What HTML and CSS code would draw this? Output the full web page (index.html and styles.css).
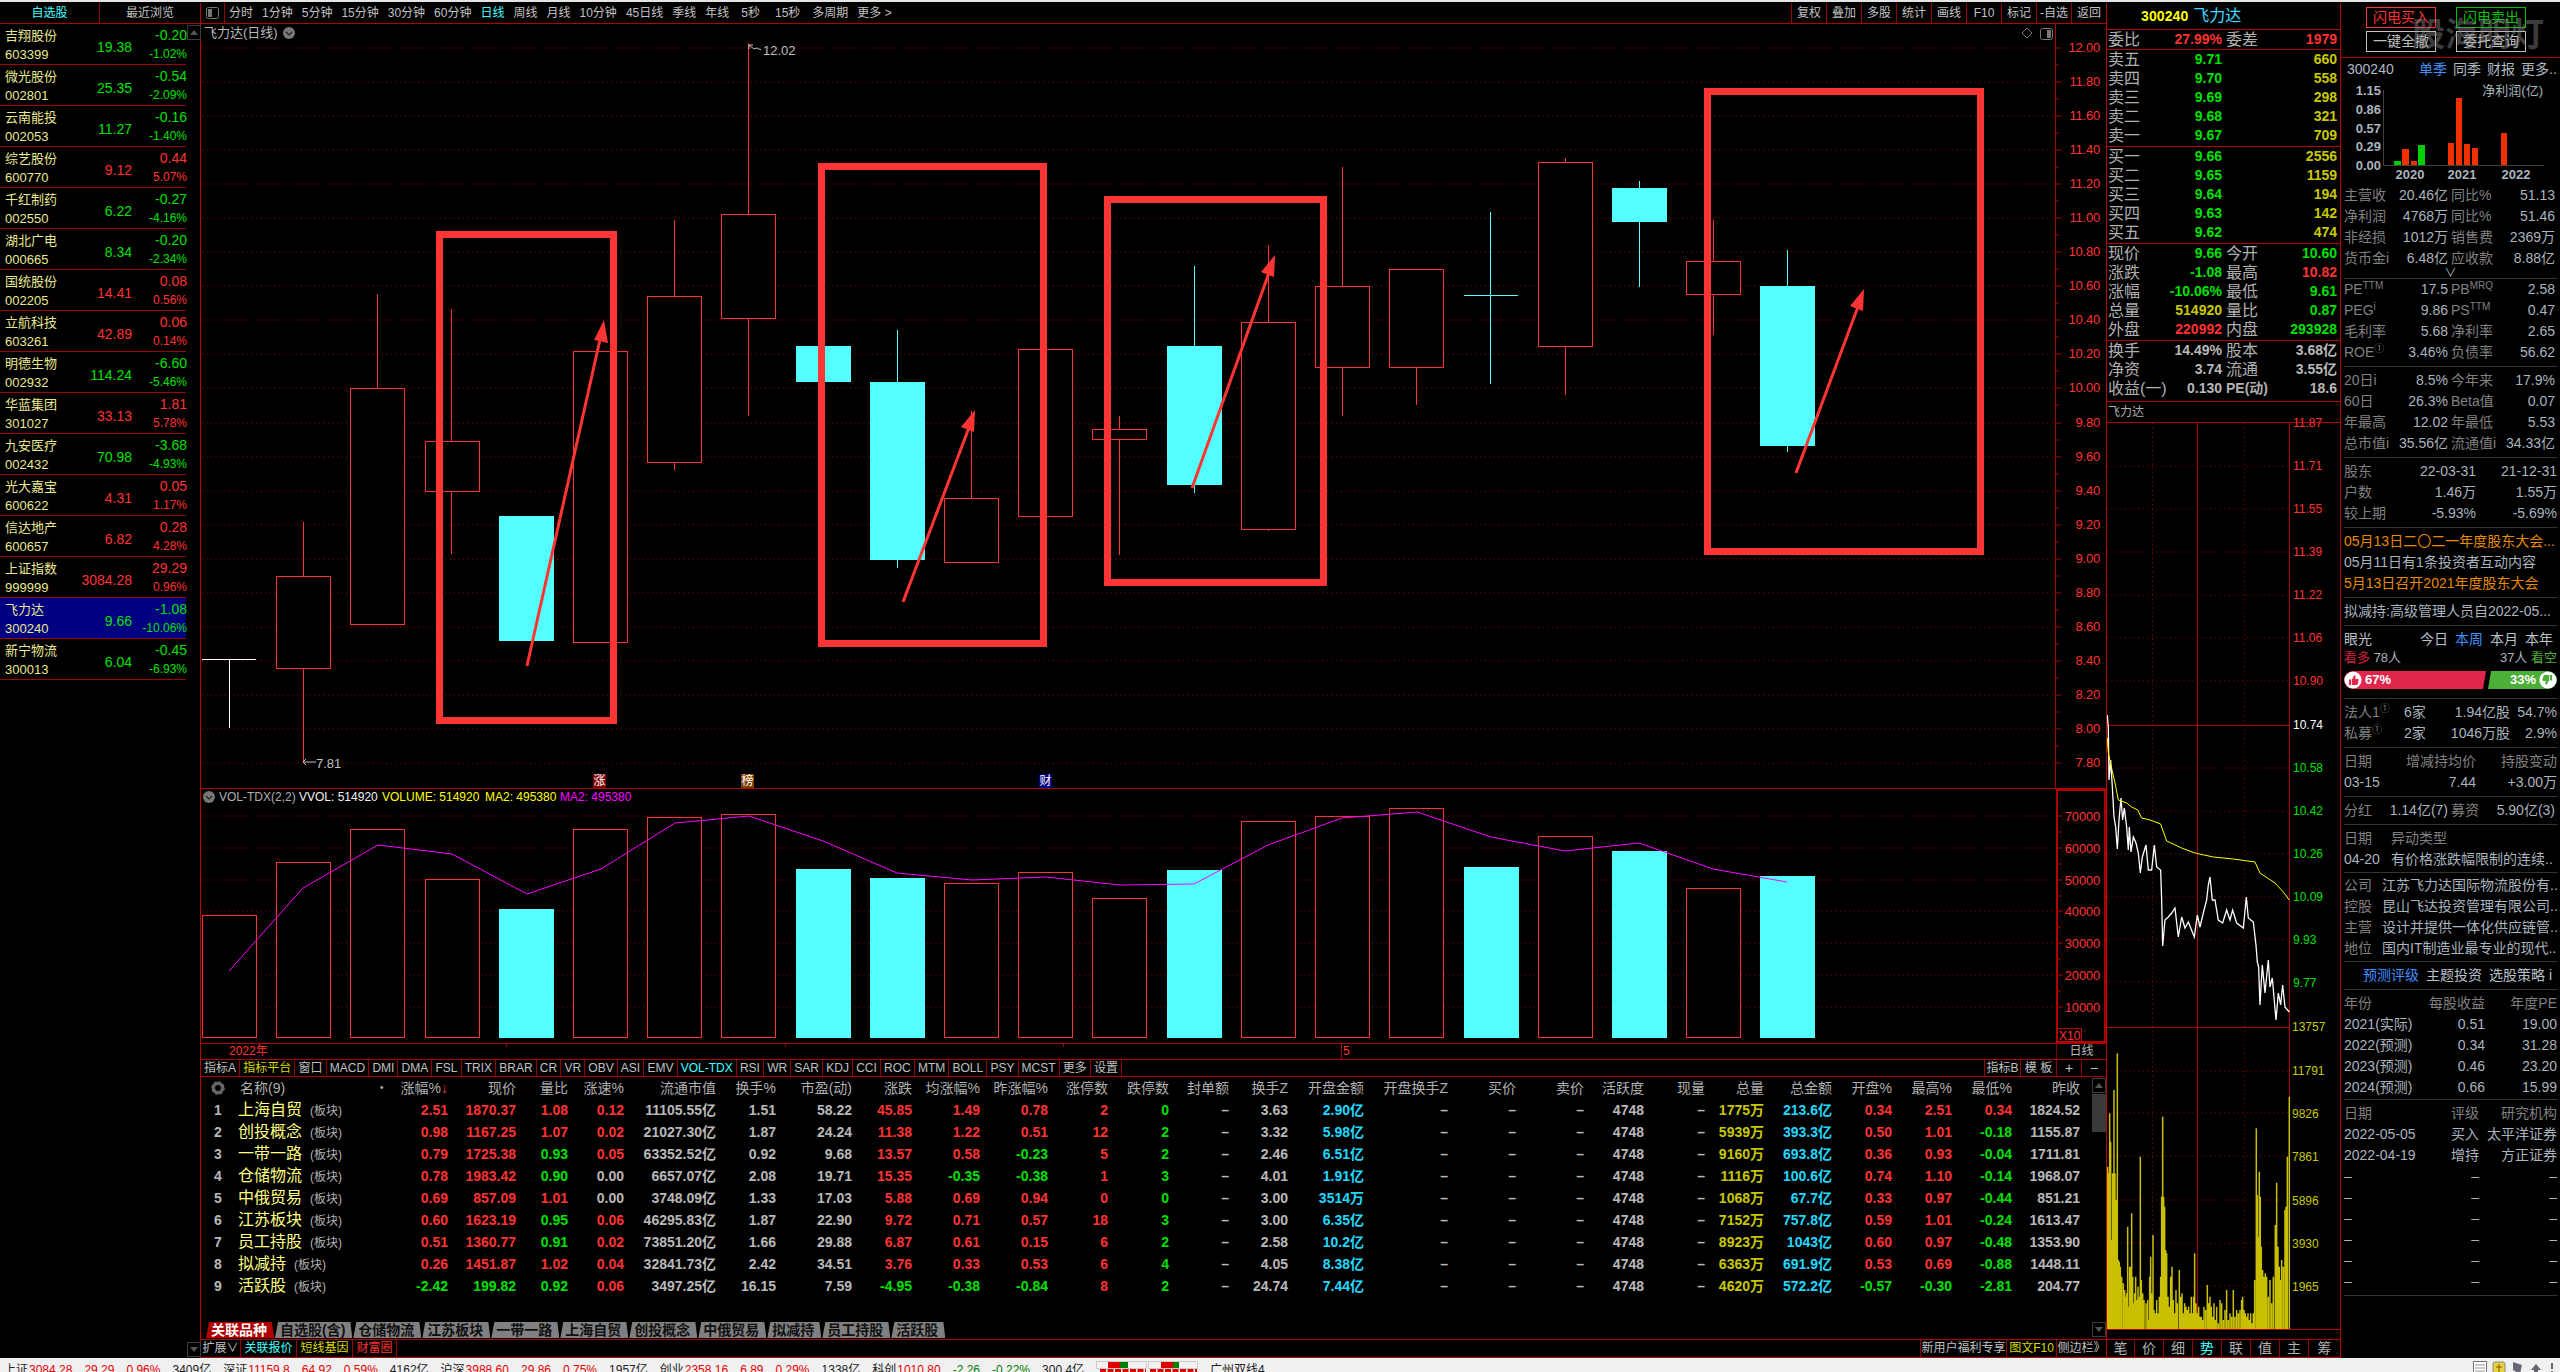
FILE: index.html
```html
<!DOCTYPE html>
<html lang="zh">
<head>
<meta charset="utf-8">
<title>飞力达</title>
<link rel="stylesheet" href="styles.css">
</head>
<body>
<div class="strip"></div>
<div class="main">

<aside class="watch">
  <div class="wtabs"><span class="wtab on">自选股</span><span class="wtab">最近浏览</span></div>
  <div class="wlist">
    <div class="wrow"><span class="wn">吉翔股份</span><span class="wp g">19.38</span><span class="wc g">-0.20</span><span class="wc2">603399</span><span class="wq g">-1.02%</span></div>
    <div class="wrow"><span class="wn">微光股份</span><span class="wp g">25.35</span><span class="wc g">-0.54</span><span class="wc2">002801</span><span class="wq g">-2.09%</span></div>
    <div class="wrow"><span class="wn">云南能投</span><span class="wp g">11.27</span><span class="wc g">-0.16</span><span class="wc2">002053</span><span class="wq g">-1.40%</span></div>
    <div class="wrow"><span class="wn">综艺股份</span><span class="wp r">9.12</span><span class="wc r">0.44</span><span class="wc2">600770</span><span class="wq r">5.07%</span></div>
    <div class="wrow"><span class="wn">千红制药</span><span class="wp g">6.22</span><span class="wc g">-0.27</span><span class="wc2">002550</span><span class="wq g">-4.16%</span></div>
    <div class="wrow"><span class="wn">湖北广电</span><span class="wp g">8.34</span><span class="wc g">-0.20</span><span class="wc2">000665</span><span class="wq g">-2.34%</span></div>
    <div class="wrow"><span class="wn">国统股份</span><span class="wp r">14.41</span><span class="wc r">0.08</span><span class="wc2">002205</span><span class="wq r">0.56%</span></div>
    <div class="wrow"><span class="wn">立航科技</span><span class="wp r">42.89</span><span class="wc r">0.06</span><span class="wc2">603261</span><span class="wq r">0.14%</span></div>
    <div class="wrow"><span class="wn">明德生物</span><span class="wp g">114.24</span><span class="wc g">-6.60</span><span class="wc2">002932</span><span class="wq g">-5.46%</span></div>
    <div class="wrow"><span class="wn">华蓝集团</span><span class="wp r">33.13</span><span class="wc r">1.81</span><span class="wc2">301027</span><span class="wq r">5.78%</span></div>
    <div class="wrow"><span class="wn">九安医疗</span><span class="wp g">70.98</span><span class="wc g">-3.68</span><span class="wc2">002432</span><span class="wq g">-4.93%</span></div>
    <div class="wrow"><span class="wn">光大嘉宝</span><span class="wp r">4.31</span><span class="wc r">0.05</span><span class="wc2">600622</span><span class="wq r">1.17%</span></div>
    <div class="wrow"><span class="wn">信达地产</span><span class="wp r">6.82</span><span class="wc r">0.28</span><span class="wc2">600657</span><span class="wq r">4.28%</span></div>
    <div class="wrow"><span class="wn">上证指数</span><span class="wp r">3084.28</span><span class="wc r">29.29</span><span class="wc2">999999</span><span class="wq r">0.96%</span></div>
    <div class="wrow sel"><span class="wn">飞力达</span><span class="wp g">9.66</span><span class="wc g">-1.08</span><span class="wc2">300240</span><span class="wq g">-10.06%</span></div>
    <div class="wrow"><span class="wn">新宁物流</span><span class="wp g">6.04</span><span class="wc g">-0.45</span><span class="wc2">300013</span><span class="wq g">-6.93%</span></div>
  </div>
  <div class="sbtn wup"><i class="tri"></i></div>
  <div class="sbtn wdn"><i class="tri down"></i></div>
</aside>

<section class="center">
  <nav class="topbar">
    <svg class="panelicon" viewBox="0 0 13 12"><rect x=".5" y=".5" width="12" height="11" rx="2" fill="none" stroke="#777"/><rect x="2" y="2" width="4" height="8" fill="#777"/></svg>
    <div class="periods">
      <span>分时</span><span>1分钟</span><span>5分钟</span><span>15分钟</span><span>30分钟</span><span>60分钟</span><span class="c">日线</span><span>周线</span><span>月线</span><span>10分钟</span><span>45日线</span><span>季线</span><span>年线</span><span class="wide">5秒</span><span class="wide">15秒</span><span>多周期</span><span>更多 &gt;</span>
    </div>
    <div class="tools"><span>复权</span><span>叠加</span><span>多股</span><span>统计</span><span>画线</span><span>F10</span><span>标记</span><span>-自选</span><span>返回</span></div>
  </nav>

  <svg class="kline" viewBox="201 24 1905 764">
    <path class="dots" d="M202 48H2055M202 82H2055M202 116H2055M202 150H2055M202 184H2055M202 218H2055M202 252H2055M202 286H2055M202 320H2055M202 354H2055M202 388H2055M202 423H2055M202 457H2055M202 491H2055M202 525H2055M202 559H2055M202 593H2055M202 627H2055M202 661H2055M202 695H2055M202 729H2055M202 763H2055"/>
    <path class="redline" d="M2055.5 24V788"/>
    <path class="redline" d="M2056 48h5M2056 65h3M2056 82h5M2056 99h3M2056 116h5M2056 133h3M2056 150h5M2056 167h3M2056 184h5M2056 201h3M2056 218h5M2056 235h3M2056 252h5M2056 269h3M2056 286h5M2056 303h3M2056 320h5M2056 337h3M2056 354h5M2056 371h3M2056 388h5M2056 405h3M2056 423h5M2056 440h3M2056 457h5M2056 474h3M2056 491h5M2056 508h3M2056 525h5M2056 542h3M2056 559h5M2056 576h3M2056 593h5M2056 610h3M2056 627h5M2056 644h3M2056 661h5M2056 678h3M2056 695h5M2056 712h3M2056 729h5M2056 746h3M2056 763h5"/>
    <g class="axis">
      <text x="2100" y="52">12.00</text><text x="2100" y="86">11.80</text><text x="2100" y="120">11.60</text><text x="2100" y="154">11.40</text><text x="2100" y="188">11.20</text><text x="2100" y="222">11.00</text><text x="2100" y="256">10.80</text><text x="2100" y="290">10.60</text><text x="2100" y="324">10.40</text><text x="2100" y="358">10.20</text><text x="2100" y="392">10.00</text><text x="2100" y="427">9.80</text><text x="2100" y="461">9.60</text><text x="2100" y="495">9.40</text><text x="2100" y="529">9.20</text><text x="2100" y="563">9.00</text><text x="2100" y="597">8.80</text><text x="2100" y="631">8.60</text><text x="2100" y="665">8.40</text><text x="2100" y="699">8.20</text><text x="2100" y="733">8.00</text><text x="2100" y="767">7.80</text>
    </g>
    <path class="wicku" d="M303.5 522V576M303.5 669V762M377.5 294V388M451.5 309V441M451.5 491V554M674.5 220V296M674.5 462V470M748.5 43V214M748.5 318V416M971.5 411V498M1119.5 416V555M1268.5 245V322M1268.5 529V531M1342.5 167V286M1342.5 367V416M1416.5 269V405M1565.5 158V162M1565.5 346V395M1713.5 220V261M1713.5 294V335"/>
    <path class="wickd" d="M897.5 330V382M897.5 560V568M1194.5 266V346M1194.5 485V493M1490.5 212V384M1464 295.5H1518M1639.5 181V188M1639.5 222V287M1787.5 250V286M1787.5 446V452"/>
    <path class="wickw" d="M202 659.5H256M229.5 659V728"/>
    <rect class="up" x="276.5" y="576.5" width="54" height="92"/>
    <rect class="up" x="350.5" y="388.5" width="54" height="236"/>
    <rect class="up" x="425.5" y="441.5" width="54" height="50"/>
    <rect class="dn" x="499" y="516" width="55" height="125"/>
    <rect class="up" x="573.5" y="351.5" width="54" height="291"/>
    <rect class="up" x="647.5" y="296.5" width="54" height="166"/>
    <rect class="up" x="721.5" y="214.5" width="54" height="104"/>
    <rect class="dn" x="796" y="346" width="55" height="36"/>
    <rect class="dn" x="870" y="382" width="55" height="178"/>
    <rect class="up" x="944.5" y="498.5" width="54" height="64"/>
    <rect class="up" x="1018.5" y="349.5" width="54" height="167"/>
    <rect class="up" x="1092.5" y="429.5" width="54" height="10"/>
    <rect class="dn" x="1167" y="346" width="55" height="139"/>
    <rect class="up" x="1241.5" y="322.5" width="54" height="207"/>
    <rect class="up" x="1315.5" y="286.5" width="54" height="81"/>
    <rect class="up" x="1389.5" y="269.5" width="54" height="98"/>
    <rect class="up" x="1538.5" y="162.5" width="54" height="184"/>
    <rect class="dn" x="1612" y="188" width="55" height="34"/>
    <rect class="up" x="1686.5" y="261.5" width="54" height="33"/>
    <rect class="dn" x="1760" y="286" width="55" height="160"/>
    <rect class="box" x="439.5" y="234.5" width="174" height="486"/>
    <rect class="box" x="821.5" y="166.5" width="222" height="477"/>
    <rect class="box" x="1107.5" y="199.5" width="216" height="383"/>
    <rect class="box" x="1707.5" y="91.5" width="273" height="460"/>
    <path class="arrow" d="M527 666L601 335"/><path class="head" d="M604 320l-10 20l14 3z"/>
    <path class="arrow" d="M903 602L970 425"/><path class="head" d="M975 410l-14 17l13 5z"/>
    <path class="arrow" d="M1192 488L1270 270"/><path class="head" d="M1275 255l-14 17l13 5z"/>
    <path class="arrow" d="M1796 473L1859 304"/><path class="head" d="M1864 289l-14 17l13 5z"/>
    <g class="note">
      <path d="M749 45l5 4l3-1l4 2M749 45v4M749 45h4M303 762H316M303 762l3-3M303 762l3 3"/>
      <text x="763" y="55">12.02</text><text x="316" y="768">7.81</text>
    </g>
    <rect x="593" y="774" width="13" height="14" fill="#800000"/>
    <rect x="741" y="774" width="13" height="14" fill="#804000"/>
    <rect x="1039" y="774" width="13" height="14" fill="#000080"/>
    <g class="marks"><text x="599.5" y="785">涨</text><text x="747.5" y="785">榜</text><text x="1045.5" y="785">财</text></g>
    <path class="diamond" d="M2027 28l5 5l-5 5l-5-5z"/>
    <rect x="2040.5" y="28.5" width="12" height="11" rx="2" fill="none" stroke="#777"/><rect x="2047" y="30" width="4" height="8" fill="#777"/>
  </svg>
  <div class="ktitle"><span>飞力达(日线)</span><svg class="cdot" viewBox="0 0 12 12"><circle cx="6" cy="6" r="6" fill="#777"/><path d="M3 5l3 3l3-3" fill="none" stroke="#222" stroke-width="1.2"/></svg></div>

  <svg class="vol" viewBox="201 789 1905 254">
    <path class="dots" d="M202 816H2055M202 848H2055M202 880H2055M202 911H2055M202 943H2055M202 975H2055M202 1007H2055"/>
    <rect class="up" x="202.5" y="915.5" width="54" height="122"/>
    <rect class="up" x="276.5" y="862.5" width="54" height="175"/>
    <rect class="up" x="350.5" y="829.5" width="54" height="208"/>
    <rect class="up" x="425.5" y="879.5" width="54" height="158"/>
    <rect class="dn" x="499" y="909" width="55" height="129"/>
    <rect class="up" x="573.5" y="829.5" width="54" height="208"/>
    <rect class="up" x="647.5" y="817.5" width="54" height="220"/>
    <rect class="up" x="721.5" y="814.5" width="54" height="223"/>
    <rect class="dn" x="796" y="869" width="55" height="169"/>
    <rect class="dn" x="870" y="878" width="55" height="160"/>
    <rect class="up" x="944.5" y="883.5" width="54" height="154"/>
    <rect class="up" x="1018.5" y="872.5" width="54" height="165"/>
    <rect class="up" x="1092.5" y="898.5" width="54" height="139"/>
    <rect class="dn" x="1167" y="870" width="55" height="168"/>
    <rect class="up" x="1241.5" y="821.5" width="54" height="216"/>
    <rect class="up" x="1315.5" y="816.5" width="54" height="221"/>
    <rect class="up" x="1389.5" y="808.5" width="54" height="229"/>
    <rect class="dn" x="1464" y="867" width="55" height="171"/>
    <rect class="up" x="1538.5" y="836.5" width="54" height="201"/>
    <rect class="dn" x="1612" y="851" width="55" height="187"/>
    <rect class="up" x="1686.5" y="888.5" width="54" height="149"/>
    <rect class="dn" x="1760" y="876" width="55" height="162"/>
    <polyline class="ma" points="229,971 303,888 378,845 452,854 527,894 601,869 675,823 749,816 823,841 897,873 972,880 1046,877 1120,885 1194,884 1268,845 1342,818 1417,812 1491,837 1565,851 1639,843 1713,869 1787,882"/>
    <rect class="thick" x="2057" y="790" width="48" height="252"/>
    <path class="redline" d="M2058 816h5M2058 848h5M2058 880h5M2058 911h5M2058 943h5M2058 975h5M2058 1007h5M2058 832h3M2058 864h3M2058 896h3M2058 927h3M2058 959h3M2058 991h3"/>
    <g class="axis">
      <text x="2100" y="821">70000</text><text x="2100" y="853">60000</text><text x="2100" y="885">50000</text><text x="2100" y="916">40000</text><text x="2100" y="948">30000</text><text x="2100" y="980">20000</text><text x="2100" y="1012">10000</text>
    </g>
    <rect class="xten" x="2057.5" y="1028.5" width="24" height="13"/>
    <text class="xtxt" x="2059" y="1040">X10</text>
    <circle cx="209" cy="797" r="6" fill="#777"/><path d="M206 796l3 3l3-3" fill="none" stroke="#222" stroke-width="1.2"/>
    <g class="legend">
      <text x="219" y="801" class="l1">VOL-TDX(2,2)</text>
      <text x="299" y="801" class="l2">VVOL: 514920</text>
      <text x="382" y="801" class="l3">VOLUME: 514920</text>
      <text x="485" y="801" class="l3">MA2: 495380</text>
      <text x="560" y="801" class="l4">MA2: 495380</text>
    </g>
  </svg>

  <div class="dates">
    <i class="tick t1"></i><i class="tick t2"></i><i class="tick t3"></i>
    <span class="y2022">2022年</span><span class="m5">5</span>
    <span class="dcell">日线</span>
  </div>

  <div class="itabs">
    <div class="igroup">
      <span>指标A</span><span class="y">指标平台</span><span>窗口</span><span>MACD</span><span>DMI</span><span>DMA</span><span>FSL</span><span>TRIX</span><span>BRAR</span><span>CR</span><span>VR</span><span>OBV</span><span>ASI</span><span>EMV</span><span class="c">VOL-TDX</span><span>RSI</span><span>WR</span><span>SAR</span><span>KDJ</span><span>CCI</span><span>ROC</span><span>MTM</span><span>BOLL</span><span>PSY</span><span>MCST</span><span>更多</span><span>设置</span>
    </div>
    <div class="igroup2"><span class="a">指标B</span><span class="a">模 板</span><span class="b">+</span><span class="b">−</span></div>
  </div>

  <div class="tablewrap">
    <div class="table">
      <div class="tr th">
        <span class="gear"><svg viewBox="0 0 14 14" width="14" height="14"><circle cx="7" cy="7" r="4.6" fill="none" stroke="#666" stroke-width="3.4"/><circle cx="7" cy="7" r="6" fill="none" stroke="#666" stroke-width="1.6" stroke-dasharray="2.4 2.3"/></svg></span>
        <span class="hn">名称(9)<em>•</em></span><span>涨幅%<b class="down">↓</b></span><span>现价</span><span>量比</span><span>涨速%</span><span>流通市值</span><span>换手%</span><span>市盈(动)</span><span>涨跌</span><span>均涨幅%</span><span>昨涨幅%</span><span>涨停数</span><span>跌停数</span><span>封单额</span><span>换手Z</span><span>开盘金额</span><span>开盘换手Z</span><span>买价</span><span>卖价</span><span>活跃度</span><span>现量</span><span>总量</span><span>总金额</span><span>开盘%</span><span>最高%</span><span>最低%</span><span>昨收</span>
      </div>
      <div class="tr"><span>1</span><span class="nm">上海自贸<small>(板块)</small></span><span class="r">2.51</span><span class="r">1870.37</span><span class="r">1.08</span><span class="r">0.12</span><span>11105.55亿</span><span>1.51</span><span>58.22</span><span class="r">45.85</span><span class="r">1.49</span><span class="r">0.78</span><span class="r">2</span><span class="g">0</span><span>–</span><span>3.63</span><span class="c">2.90亿</span><span>–</span><span>–</span><span>–</span><span>4748</span><span>–</span><span class="y">1775万</span><span class="c">213.6亿</span><span class="r">0.34</span><span class="r">2.51</span><span class="r">0.34</span><span>1824.52</span></div>
      <div class="tr"><span>2</span><span class="nm">创投概念<small>(板块)</small></span><span class="r">0.98</span><span class="r">1167.25</span><span class="r">1.07</span><span class="r">0.02</span><span>21027.30亿</span><span>1.87</span><span>24.24</span><span class="r">11.38</span><span class="r">1.22</span><span class="r">0.51</span><span class="r">12</span><span class="g">2</span><span>–</span><span>3.32</span><span class="c">5.98亿</span><span>–</span><span>–</span><span>–</span><span>4748</span><span>–</span><span class="y">5939万</span><span class="c">393.3亿</span><span class="r">0.50</span><span class="r">1.01</span><span class="g">-0.18</span><span>1155.87</span></div>
      <div class="tr"><span>3</span><span class="nm">一带一路<small>(板块)</small></span><span class="r">0.79</span><span class="r">1725.38</span><span class="g">0.93</span><span class="r">0.05</span><span>63352.52亿</span><span>0.92</span><span>9.68</span><span class="r">13.57</span><span class="r">0.58</span><span class="g">-0.23</span><span class="r">5</span><span class="g">2</span><span>–</span><span>2.46</span><span class="c">6.51亿</span><span>–</span><span>–</span><span>–</span><span>4748</span><span>–</span><span class="y">9160万</span><span class="c">693.8亿</span><span class="r">0.36</span><span class="r">0.93</span><span class="g">-0.04</span><span>1711.81</span></div>
      <div class="tr"><span>4</span><span class="nm">仓储物流<small>(板块)</small></span><span class="r">0.78</span><span class="r">1983.42</span><span class="g">0.90</span><span>0.00</span><span>6657.07亿</span><span>2.08</span><span>19.71</span><span class="r">15.35</span><span class="g">-0.35</span><span class="g">-0.38</span><span class="r">1</span><span class="g">3</span><span>–</span><span>4.01</span><span class="c">1.91亿</span><span>–</span><span>–</span><span>–</span><span>4748</span><span>–</span><span class="y">1116万</span><span class="c">100.6亿</span><span class="r">0.74</span><span class="r">1.10</span><span class="g">-0.14</span><span>1968.07</span></div>
      <div class="tr"><span>5</span><span class="nm">中俄贸易<small>(板块)</small></span><span class="r">0.69</span><span class="r">857.09</span><span class="r">1.01</span><span>0.00</span><span>3748.09亿</span><span>1.33</span><span>17.03</span><span class="r">5.88</span><span class="r">0.69</span><span class="r">0.94</span><span class="r">0</span><span class="g">0</span><span>–</span><span>3.00</span><span class="c">3514万</span><span>–</span><span>–</span><span>–</span><span>4748</span><span>–</span><span class="y">1068万</span><span class="c">67.7亿</span><span class="r">0.33</span><span class="r">0.97</span><span class="g">-0.44</span><span>851.21</span></div>
      <div class="tr"><span>6</span><span class="nm">江苏板块<small>(板块)</small></span><span class="r">0.60</span><span class="r">1623.19</span><span class="g">0.95</span><span class="r">0.06</span><span>46295.83亿</span><span>1.87</span><span>22.90</span><span class="r">9.72</span><span class="r">0.71</span><span class="r">0.57</span><span class="r">18</span><span class="g">3</span><span>–</span><span>3.00</span><span class="c">6.35亿</span><span>–</span><span>–</span><span>–</span><span>4748</span><span>–</span><span class="y">7152万</span><span class="c">757.8亿</span><span class="r">0.59</span><span class="r">1.01</span><span class="g">-0.24</span><span>1613.47</span></div>
      <div class="tr"><span>7</span><span class="nm">员工持股<small>(板块)</small></span><span class="r">0.51</span><span class="r">1360.77</span><span class="g">0.91</span><span class="r">0.02</span><span>73851.20亿</span><span>1.66</span><span>29.88</span><span class="r">6.87</span><span class="r">0.61</span><span class="r">0.15</span><span class="r">6</span><span class="g">2</span><span>–</span><span>2.58</span><span class="c">10.2亿</span><span>–</span><span>–</span><span>–</span><span>4748</span><span>–</span><span class="y">8923万</span><span class="c">1043亿</span><span class="r">0.60</span><span class="r">0.97</span><span class="g">-0.48</span><span>1353.90</span></div>
      <div class="tr"><span>8</span><span class="nm">拟减持<small>(板块)</small></span><span class="r">0.26</span><span class="r">1451.87</span><span class="r">1.02</span><span class="r">0.04</span><span>32841.73亿</span><span>2.42</span><span>34.51</span><span class="r">3.76</span><span class="r">0.33</span><span class="r">0.53</span><span class="r">6</span><span class="g">4</span><span>–</span><span>4.05</span><span class="c">8.38亿</span><span>–</span><span>–</span><span>–</span><span>4748</span><span>–</span><span class="y">6363万</span><span class="c">691.9亿</span><span class="r">0.53</span><span class="r">0.69</span><span class="g">-0.88</span><span>1448.11</span></div>
      <div class="tr"><span>9</span><span class="nm">活跃股<small>(板块)</small></span><span class="g">-2.42</span><span class="g">199.82</span><span class="g">0.92</span><span class="r">0.06</span><span>3497.25亿</span><span>16.15</span><span>7.59</span><span class="g">-4.95</span><span class="g">-0.38</span><span class="g">-0.84</span><span class="r">8</span><span class="g">2</span><span>–</span><span>24.74</span><span class="c">7.44亿</span><span>–</span><span>–</span><span>–</span><span>4748</span><span>–</span><span class="y">4620万</span><span class="c">572.2亿</span><span class="g">-0.57</span><span class="g">-0.30</span><span class="g">-2.81</span><span>204.77</span></div>
      <div class="sheets">
        <span class="on">关联品种</span><span>自选股(含)</span><span>仓储物流</span><span>江苏板块</span><span>一带一路</span><span>上海自贸</span><span>创投概念</span><span>中俄贸易</span><span>拟减持</span><span>员工持股</span><span>活跃股</span>
      </div>
    </div>
    <div class="tscroll"><div class="sbtn"><i class="tri"></i></div><div class="thumb"></div><div class="sbtn last"><i class="tri down"></i></div></div>
  </div>

  <div class="extra">
    <span>扩展∨</span><span class="c">关联报价</span><span class="y">短线基因</span><span class="r">财富圈</span>
    <div class="extra-r"><span class="welfare">新用户福利专享</span><span class="y small">图文F10</span><span class="small">侧边栏》</span></div>
  </div>
</section>

<section class="quote">
  <div class="qhead"><b>300240</b><span>飞力达</span></div>
  <div class="qsec nopb"><div class="q"><span>委比</span><b class="r">27.99%</b><span>委差</span><b class="r">1979</b></div></div>
  <div class="qsec">
    <div class="q"><span>卖五</span><b class="g">9.71</b><i></i><b class="o">660</b></div>
    <div class="q"><span>卖四</span><b class="g">9.70</b><i></i><b class="o">558</b></div>
    <div class="q"><span>卖三</span><b class="g">9.69</b><i></i><b class="o">298</b></div>
    <div class="q"><span>卖二</span><b class="g">9.68</b><i></i><b class="o">321</b></div>
    <div class="q"><span>卖一</span><b class="g">9.67</b><i></i><b class="o">709</b></div>
  </div>
  <div class="qsec">
    <div class="q"><span>买一</span><b class="g">9.66</b><i></i><b class="o">2556</b></div>
    <div class="q"><span>买二</span><b class="g">9.65</b><i></i><b class="o">1159</b></div>
    <div class="q"><span>买三</span><b class="g">9.64</b><i></i><b class="o">194</b></div>
    <div class="q"><span>买四</span><b class="g">9.63</b><i></i><b class="o">142</b></div>
    <div class="q"><span>买五</span><b class="g">9.62</b><i></i><b class="o">474</b></div>
  </div>
  <div class="qsec">
    <div class="q"><span>现价</span><b class="g">9.66</b><span>今开</span><b class="g">10.60</b></div>
    <div class="q"><span>涨跌</span><b class="g">-1.08</b><span>最高</span><b class="r">10.82</b></div>
    <div class="q"><span>涨幅</span><b class="g">-10.06%</b><span>最低</span><b class="g">9.61</b></div>
    <div class="q"><span>总量</span><b class="o">514920</b><span>量比</span><b class="g">0.87</b></div>
    <div class="q"><span>外盘</span><b class="r">220992</b><span>内盘</span><b class="g">293928</b></div>
  </div>
  <div class="qsec pb3">
    <div class="q"><span>换手</span><b>14.49%</b><span>股本</span><b>3.68亿</b></div>
    <div class="q"><span>净资</span><b>3.74</b><span>流通</span><b>3.55亿</b></div>
    <div class="q"><span>收益(一)</span><b>0.130</b><span class="pe">PE(动)</span><b>18.6</b></div>
  </div>
  <div class="qname">飞力达</div>
  <svg class="mini" viewBox="2107 423 233 916">
    <path class="dots2" d="M2107 466H2289M2107 509H2289M2107 552H2289M2107 595H2289M2107 638H2289M2107 681H2289M2107 768H2289M2107 811H2289M2107 854H2289M2107 897H2289M2107 939H2289M2107 982H2289M2107 1071H2289M2107 1113H2289M2107 1156H2289M2107 1200H2289M2107 1243H2289M2107 1286H2289M2152.5 423V1329M2244.5 423V1329"/>
    <path class="redline" d="M2197.5 423V1329M2107 725.5H2289M2107 1027.5H2289M2289.5 423V1329M2107 1329.5H2340"/>
    <g transform="translate(2040 900) scale(.3333)">
      <path class="vbars" d="M203 800V1287M206 820V1287M209 640V1287M212 725V1287M215 1020V1287M218 820V1287M222 570V1287M225 820V1287M228 900V1287M232 460V1287M235 1080V1287M238 1085V1287M241 1100V1287M245 1130V1287M250 1150V1287M254 1170V1287M257 1190V1287M260 1180V1287M263 980V1287M266 1220V1287M269 1100V1287M272 1100V1287M275 940V1287M278 1130V1287M281 1210V1287M284 1180V1287M287 1130V1287M290 1200V1287M294 1160V1287M298 1190V1287M301 770V1287M304 1140V1287M308 1180V1287M312 1200V1287M318 1210V1287M323 1200V1287M326 1260V1287M329 1130V1287M332 1070V1287M335 1180V1287M339 1005V1287M342 1230V1287M346 1240V1287M350 1200V1287M354 1240V1287M358 1190V1287M362 1130V1287M365 890V1287M368 650V1287M371 890V1287M374 920V1287M377 1050V1287M380 1060V1287M384 1190V1287M388 1220V1287M392 1130V1287M396 1100V1287M400 1200V1287M404 1240V1287M408 1170V1287M412 1210V1287M418 1110V1287M422 1190V1287M426 1180V1287M430 1240V1287M434 1210V1287M438 1220V1287M442 1230V1287M446 1220V1287M450 1240V1287M454 1190V1287M458 1240V1287M461 1190V1287M464 1060V1287M468 1210V1287M472 1240V1287M476 1220V1287M480 1250V1287M484 1250V1287M488 1260V1287M492 1220V1287M497 1230V1287M502 1155V1287M506 1210V1287M510 1190V1287M514 1220V1287M518 1250V1287M522 1210V1287M526 1260V1287M530 1220V1287M535 1270V1287M540 1200V1287M545 1210V1287M550 1260V1287M555 1230V1287M560 1170V1287M565 1260V1287M570 1240V1287M575 1250V1287M580 1170V1287M585 1250V1287M590 1230V1287M595 1240V1287M600 1230V1287M605 1200V1287M608 1190V1287M612 1230V1287M616 1240V1287M620 1250V1287M624 1240V1287M628 1260V1287M632 1240V1287M636 1270V1287M640 1240V1287M644 1140V1287M649 685V1287M652 885V1287M655 1010V1287M658 815V1287M661 890V1287M664 1040V1287M668 1110V1287M672 1130V1287M676 1120V1287M680 1130V1287M685 1190V1287M690 1140V1287M695 1210V1287M700 1130V1287M706 975V1287M710 848V1287M714 1040V1287M718 1100V1287M722 1140V1287M725 1080V1287M730 1100V1287M735 930V1287M738 920V1287M742 770V1287M748 590V1287"/>
    </g>
    <g transform="translate(2040 0) scale(.3333 1)">
      <polyline class="price" points="202,715 205,728 207,780 212,760 217,787 222,817 227,827 232,849 237,820 243,798 248,820 253,808 260,827 265,850 268,827 273,852 280,837 288,843 295,853 301,873 307,857 318,845 325,870 335,870 343,845 350,867 362,870 365,900 368,946 375,920 385,917 395,913 405,908 415,937 425,917 435,928 445,922 463,937 472,915 480,927 490,913 500,900 505,885 510,877 517,900 525,900 535,920 548,923 560,910 570,920 578,910 590,923 610,928 619,897 625,918 640,922 648,945 652,962 656,967 660,1005 667,965 675,993 685,960 690,987 697,978 702,997 708,1020 715,993 722,1005 728,985 735,1007 748,1012"/>
      <polyline class="avg" points="202,738 205,753 218,773 225,783 235,800 260,803 275,807 293,810 305,818 330,820 362,824 380,841 425,848 465,853 520,857 580,859 645,862 660,873 705,883 730,892 748,900"/>
    </g>
    <g class="mr"><text x="2293" y="427">11.87</text><text x="2293" y="470">11.71</text><text x="2293" y="513">11.55</text><text x="2293" y="556">11.39</text><text x="2293" y="599">11.22</text><text x="2293" y="642">11.06</text><text x="2293" y="685">10.90</text></g>
    <text class="mw" x="2293" y="729">10.74</text>
    <g class="mg"><text x="2293" y="772">10.58</text><text x="2293" y="815">10.42</text><text x="2293" y="858">10.26</text><text x="2293" y="901">10.09</text><text x="2293" y="944">9.93</text><text x="2293" y="987">9.77</text></g>
    <g class="my"><text x="2292" y="1031">13757</text><text x="2292" y="1075">11791</text><text x="2292" y="1118">9826</text><text x="2292" y="1161">7861</text><text x="2292" y="1205">5896</text><text x="2292" y="1248">3930</text><text x="2292" y="1291">1965</text></g>
  </svg>
  <div class="qtabs"><span>笔</span><span>价</span><span>细</span><span class="c">势</span><span>联</span><span>值</span><span>主</span><span>筹</span></div>
</section>

<section class="fin">
  <div class="mark">股海明灯</div>
  <div class="btns"><span class="br">闪电买入</span><span class="bg">闪电卖出</span><span class="bw">一键全撤</span><span class="bw">委托查询</span></div>
  <div class="fhead"><span class="code">300240</span><span class="bl">单季</span><span>同季</span><span>财报</span><span>更多..</span></div>
  <svg class="fchart" viewBox="2341 81 219 105">
    <path d="M2383.5 91V166.5H2544" fill="none" stroke="#404040"/>
    <g class="fy"><text x="2381" y="96">1.15</text><text x="2381" y="115">0.86</text><text x="2381" y="134">0.57</text><text x="2381" y="152">0.29</text><text x="2381" y="171">0.00</text></g>
    <text class="ft" x="2543" y="96">净利润(亿)</text>
    <rect class="bgr" x="2394" y="162" width="7" height="4"/>
    <rect class="bo" x="2402" y="150" width="7" height="16"/>
    <rect class="bo" x="2411" y="162" width="6" height="4"/>
    <rect class="bgr" x="2418" y="146" width="7" height="20"/>
    <rect class="bo" x="2448" y="144" width="6" height="22"/>
    <rect class="bo" x="2456" y="99" width="6" height="67"/>
    <rect class="bo" x="2464" y="145" width="6" height="21"/>
    <rect class="bo" x="2472" y="149" width="6" height="17"/>
    <rect class="bo" x="2501" y="134" width="6" height="32"/>
    <g class="fx"><text x="2410" y="180">2020</text><text x="2462" y="180">2021</text><text x="2516" y="180">2022</text></g>
  </svg>
  <div class="fsec pb0">
    <div class="r4"><span class="l">主营收</span><span>20.46亿</span><span class="l2">同比%</span><span>51.13</span></div>
    <div class="r4"><span class="l">净利润</span><span>4768万</span><span class="l2">同比%</span><span>51.46</span></div>
    <div class="r4"><span class="l">非经损</span><span>1012万</span><span class="l2">销售费</span><span>2369万</span></div>
    <div class="r4"><span class="l">货币金i</span><span>6.48亿</span><span class="l2">应收款</span><span>8.88亿</span></div>
    <div class="caret">∨</div>
  </div>
  <div class="fsec pt0">
    <div class="r4"><span class="l">PE<sup>TTM</sup></span><span>17.5</span><span class="l2">PB<sup>MRQ</sup></span><span>2.58</span></div>
    <div class="r4"><span class="l">PEG<sup>i</sup></span><span>9.86</span><span class="l2">PS<sup>TTM</sup></span><span>0.47</span></div>
    <div class="r4"><span class="l">毛利率</span><span>5.68</span><span class="l2">净利率</span><span>2.65</span></div>
    <div class="r4"><span class="l">ROE<sup>①</sup></span><span>3.46%</span><span class="l2">负债率</span><span>56.62</span></div>
  </div>
  <div class="fsec">
    <div class="r4"><span class="l">20日i</span><span>8.5%</span><span class="l2">今年来</span><span>17.9%</span></div>
    <div class="r4"><span class="l">60日</span><span>26.3%</span><span class="l2">Beta值</span><span>0.07</span></div>
    <div class="r4"><span class="l">年最高</span><span>12.02</span><span class="l2">年最低</span><span>5.53</span></div>
    <div class="r4"><span class="l">总市值i</span><span>35.56亿</span><span class="l2">流通值i</span><span>34.33亿</span></div>
  </div>
  <div class="fsec">
    <div class="r3"><span class="l">股东</span><span>22-03-31</span><span>21-12-31</span></div>
    <div class="r3"><span class="l">户数</span><span>1.46万</span><span>1.55万</span></div>
    <div class="r3"><span class="l">较上期</span><span>-5.93%</span><span>-5.69%</span></div>
  </div>
  <div class="fsec">
    <div class="line or">05月13日二〇二一年度股东大会...</div>
    <div class="line">05月11日有1条投资者互动内容</div>
    <div class="line or">5月13日召开2021年度股东大会</div>
  </div>
  <div class="fsec"><div class="line">拟减持:高级管理人员自2022-05...</div></div>
  <div class="fsec eye">
    <div class="eyehead"><span class="lb">眼光</span><span>今日</span><span class="bl">本周</span><span>本月</span><span>本年</span></div>
    <div class="eyesub"><span><em class="up">看多</em> 78人</span><span>37人 <em class="dn">看空</em></span></div>
    <div class="vote">
      <div class="vup"><svg class="thumb-i" viewBox="0 0 18 18"><circle cx="9" cy="9" r="8.6" fill="#fff"/><path d="M5 8.5h2.2v5.5H5zM8 8.5l2.3-4.2c1.2 0 1.6 1 1.3 2l-.4 1.7h2.4c.8 0 1.2.7 1 1.4l-1 3.6c-.2.6-.6 1-1.2 1H8z" fill="#e0264a"/></svg><span>67%</span></div>
      <div class="vdn"><span>33%</span><svg class="thumb-i" viewBox="0 0 18 18"><circle cx="9" cy="9" r="8.6" fill="#fff"/><path d="M13 9.5h-2.2V4H13zM10 9.5l-2.3 4.2c-1.2 0-1.6-1-1.3-2l.4-1.7H4.4c-.8 0-1.2-.7-1-1.4l1-3.6c.2-.6.6-1 1.2-1H10z" fill="#4caf38"/></svg></div>
    </div>
  </div>
  <div class="fsec">
    <div class="r3h"><span class="l">法人1<sup>①</sup></span><span class="le">6家</span><span>1.94亿股</span><span>54.7%</span></div>
    <div class="r3h"><span class="l">私募<sup>①</sup></span><span class="le">2家</span><span>1046万股</span><span>2.9%</span></div>
  </div>
  <div class="fsec">
    <div class="r3"><span class="l">日期</span><span class="l">增减持均价</span><span class="l">持股变动</span></div>
    <div class="r3"><span>03-15</span><span>7.44</span><span>+3.00万</span></div>
  </div>
  <div class="fsec"><div class="r4"><span class="l">分红</span><span>1.14亿(7)</span><span class="l2">募资</span><span>5.90亿(3)</span></div></div>
  <div class="fsec pb2">
    <div class="r2"><span class="l">日期</span><span class="l">异动类型</span></div>
    <div class="r2"><span>04-20</span><span>有价格涨跌幅限制的连续..</span></div>
  </div>
  <div class="fsec pt2b2">
    <div class="r2 nar"><span class="l">公司</span><span>江苏飞力达国际物流股份有..</span></div>
    <div class="r2 nar"><span class="l">控股</span><span>昆山飞达投资管理有限公司..</span></div>
    <div class="r2 nar"><span class="l">主营</span><span>设计并提供一体化供应链管..</span></div>
    <div class="r2 nar"><span class="l">地位</span><span>国内IT制造业最专业的现代..</span></div>
  </div>
  <div class="fsec"><div class="ftabs"><span class="bl">预测评级</span><span>主题投资</span><span>选股策略</span><span class="i">i</span></div></div>
  <div class="fsec pb1">
    <div class="r3e"><span class="l">年份</span><span class="l">每股收益</span><span class="l">年度PE</span></div>
    <div class="r3e"><span>2021(实际)</span><span>0.51</span><span>19.00</span></div>
    <div class="r3e"><span>2022(预测)</span><span>0.34</span><span>31.28</span></div>
    <div class="r3e"><span>2023(预测)</span><span>0.46</span><span>23.20</span></div>
    <div class="r3e"><span>2024(预测)</span><span>0.66</span><span>15.99</span></div>
  </div>
  <div class="fsec">
    <div class="r3f"><span class="l">日期</span><span class="l">评级</span><span class="l">研究机构</span></div>
    <div class="r3f"><span>2022-05-05</span><span>买入</span><span>太平洋证券</span></div>
    <div class="r3f"><span>2022-04-19</span><span>增持</span><span>方正证券</span></div>
    <div class="r3f"><span>–</span><span>–</span><span>–</span></div>
    <div class="r3f"><span>–</span><span>–</span><span>–</span></div>
    <div class="r3f"><span>–</span><span>–</span><span>–</span></div>
    <div class="r3f"><span>–</span><span>–</span><span>–</span></div>
    <div class="r3f"><span>–</span><span>–</span><span>–</span></div>
    <div class="r3f"><span>–</span><span>–</span><span>–</span></div>
  </div>
</section>
</div>

<footer class="status">
  <div class="idx"><span>上证</span><em>3084.28</em><em>29.29</em><em>0.96%</em><span>3409亿</span></div>
  <div class="idx"><span>深证</span><em>11159.8</em><em>64.92</em><em>0.59%</em><span>4162亿</span></div>
  <div class="idx"><span>沪深</span><em>3988.60</em><em>29.86</em><em>0.75%</em><span>1957亿</span></div>
  <div class="idx"><span>创业</span><em>2358.16</em><em>6.89</em><em>0.29%</em><span>1338亿</span></div>
  <div class="idx"><span>科创</span><em>1010.80</em><em class="gn">-2.26</em><em class="gn">-0.22%</em><span>300.4亿</span></div>
  <svg class="meter" viewBox="0 0 102 12"><rect x=".5" y=".5" width="50" height="7" fill="none" stroke="#ccc"/><rect x="52.5" y=".5" width="49" height="7" fill="none" stroke="#ccc"/><rect x="12" y="1" width="12" height="6" fill="#e00000"/><rect x="24" y="1" width="8" height="6" fill="#008000"/><rect x="65" y="1" width="12" height="6" fill="#e00000"/><rect x="77" y="1" width="6" height="6" fill="#008000"/><path d="M4 10h46M54 10h47" stroke="#e00000" stroke-width="4" stroke-dasharray="6 1.5"/></svg>
  <span class="srv">广州双线4</span>
  <svg class="sicons" viewBox="0 0 84 14"><rect x=".5" y=".5" width="13" height="13" fill="#fff" stroke="#777"/><path d="M2 4h10M2 7h10M2 10h10" stroke="#999"/><rect x="20" y="1" width="12" height="12" rx="2" fill="#e8d040" stroke="#888"/><path d="M26 3v8M23 6h6" stroke="#806000"/><path d="M40 1l9 3l-2 9l-7-4z" fill="#667"/><path d="M58 9l5-6l5 6zM61 9h4v5h-4z" fill="#667"/><rect x="78" y="2" width="2" height="6" fill="#667"/><rect x="78" y="10" width="2" height="2" fill="#667"/></svg>
</footer>
</body>
</html>
```
FILE: styles.css
```css
*{box-sizing:border-box}
html,body{margin:0;padding:0}
body{width:2560px;height:1372px;background:#000;color:#c0c0c0;font:14px/1.2 "Liberation Sans","Noto Sans CJK SC",sans-serif;overflow:hidden;display:flex;flex-direction:column}
i,em{font-style:normal}
.strip{height:2px;background:#e4e4e4;flex:none}
.main{flex:none;height:1356px;padding-top:1px;display:flex;position:relative}
.status{flex:none;height:14px;background:#f0f0f0;display:flex;align-items:flex-start;gap:12px;padding:5px 0 0 4px;overflow:hidden;color:#222;font-size:12px;line-height:14px;white-space:nowrap}
.r{color:#ff3232}.g{color:#00e000}.c{color:#40ffff}.y{color:#d8d800}.o{color:#c8c800}

/* watch list */
.watch{width:201px;flex:none;border-right:1px solid #c00000;position:relative}
.wtabs{height:21px;display:flex;border-bottom:1px solid #b00000;font-size:12px;line-height:20px;text-align:center}
.wtab{width:100px;border-right:1px solid #900}
.wtab:last-child{border:0;width:100px}
.wtab.on{color:#40ffff}
.wrow{width:186px;height:41px;border-bottom:1px solid #a00000;display:grid;grid-template-columns:58px 69px 55px;grid-template-rows:20px 17px;padding:2px 0 0 5px;color:#e8e890}
.wrow.sel{background:#000080}
.wn{font-size:13px;line-height:20px;white-space:nowrap;grid-column:1}
.wp{grid-column:2;grid-row:1/3;font-size:14px;text-align:right;align-self:center;padding-top:5px}
.wc{grid-column:3;font-size:14px;text-align:right;line-height:19px}
.wc2{grid-column:1;grid-row:2;font-size:13px;line-height:17px}
.wq{grid-column:3;grid-row:2;font-size:12px;text-align:right;line-height:17px}
.sbtn{width:14px;height:15px;border:1px solid #3c3c3c;display:flex;align-items:center;justify-content:center}
.wup{position:absolute;left:187px;top:22px}
.wdn{position:absolute;left:187px;bottom:1px}
.tri{width:0;height:0;border:4px solid transparent;border-bottom:5px solid #555;border-top:0}
.tri.down{border-bottom:0;border-top:5px solid #555}

/* center */
.center{width:1906px;flex:none;border-right:1px solid #c00000;display:flex;flex-direction:column;position:relative}
.topbar{height:21px;flex:none;border-bottom:1px solid #b00000;display:flex;align-items:center;font-size:12px;padding-left:5px}
.panelicon{width:13px;height:12px;flex:none}
.periods{display:flex;gap:9px;margin-left:5px;padding-left:4px;border-left:1px solid #900;height:20px;align-items:center;white-space:nowrap}
.periods .c{color:#40ffff}
.periods .wide{padding:0 3px}
.tools{margin-left:auto;display:flex;height:20px}
.tools span{width:35px;border-left:1px solid #900;text-align:center;line-height:20px;white-space:nowrap}
.kline{display:block;width:1905px;height:764px;flex:none}
.vol{display:block;width:1905px;height:255px;flex:none;border-top:1px solid #b00000}
.ktitle{position:absolute;left:3px;top:20px;height:20px;display:flex;align-items:center;gap:5px;font-size:13px;color:#b8b8b8}
.cdot{width:12px;height:12px}
.dots,.dots2{stroke:#a00000;stroke-dasharray:1 3.5;fill:none;stroke-width:1}
.redline{stroke:#b00000;fill:none;stroke-width:1}
.thick{stroke:#b00000;fill:none;stroke-width:2}
.axis text{fill:#ff3232;font-size:13px;letter-spacing:-.2px;text-anchor:end}
.up{fill:#000;stroke:#ff3232;stroke-width:1}
.dn{fill:#54ffff}
.wicku{stroke:#ff3232;fill:none;stroke-width:1}
.wickd{stroke:#54ffff;fill:none;stroke-width:1}
.wickw{stroke:#fff;fill:none;stroke-width:1}
.box{fill:none;stroke:#ff3535;stroke-width:7}
.arrow{stroke:#ff3535;stroke-width:3;fill:none}
.head{fill:#ff3535}
.note path{stroke:#c0c0c0;fill:none}
.note text{fill:#c0c0c0;font-size:13px}
.marks text{fill:#fff;font-size:12px;text-anchor:middle}
.diamond{fill:none;stroke:#777}
.ma{fill:none;stroke:#ff00ff;stroke-width:1}
.xten{fill:none;stroke:#c00000}
.xtxt{fill:#ff3232;font-size:12px}
.legend text{font-size:12px}
.l1{fill:#b0b0b0}.l2{fill:#f0f0f0}.l3{fill:#ffff00}.l4{fill:#ff00ff}

.dates{height:17px;flex:none;border-top:1px solid #b00000;border-bottom:1px solid #b00000;position:relative;font-size:12px;line-height:15px;color:#ff3232}
.tick{position:absolute;top:0;width:1px;height:3px;background:#b00000}
.t1{left:305px}.t2{left:584px}.t3{left:862px}
.y2022{position:absolute;left:28px;top:0}
.m5{position:absolute;left:1140px;top:0;border-left:1px solid #b00000;padding-left:1px;height:15px}
.dcell{position:absolute;right:0;top:0;width:50px;height:15px;border-left:1px solid #700;color:#b8b8b8;text-align:center}

.itabs{height:17px;flex:none;border-bottom:1px solid #b00000;display:flex;font-size:12px;line-height:16px;white-space:nowrap}
.igroup{width:921px;display:flex;flex:none}
.igroup span{flex:1 1 auto;text-align:center;border-right:1px solid #900;padding:0 3px}
.igroup .y{color:#d8d800}.igroup .c{color:#40ffff}
.igroup2{margin-left:auto;display:flex}
.igroup2 .a{width:36px;text-align:center;border-left:1px solid #900}
.igroup2 .b{width:25px;text-align:center;border-left:1px solid #900;font-size:14px}

.tablewrap{flex:none;height:263px;border-bottom:1px solid #b00000;display:flex;position:relative}
.table{width:1889px;flex:none;padding-left:2px;display:flex;flex-direction:column}
.tr{display:grid;grid-template-columns:35px 162px 48px 68px 52px 56px 92px 60px 76px 60px 68px 68px 60px 61px 60px 59px 76px 84px 68px 68px 60px 61px 59px 68px 60px 60px 60px 68px;height:22px;line-height:22px;font-weight:700;font-size:14px;color:#b8b8b8;text-align:right;white-space:nowrap}
.tr span:first-child{text-align:center;padding-right:5px}
.tr .r{color:#ff3232}.tr .g{color:#00e000}.tr .c{color:#20d8ff}.tr .y{color:#c8c800}
.nm{text-align:left;font-weight:400;font-size:16px;color:#ffff80}
.nm small{font-size:12px;color:#b0b0b0;margin-left:8px}
.th{font-weight:400;color:#b0b0b0}
.gear{display:flex;align-items:center;justify-content:center}
.hn{text-align:left;position:relative;padding-left:2px}
.hn em{position:absolute;left:142px;font-size:10px}
.down{color:#ff3232;font-weight:700}
.sheets{margin-top:auto;margin-bottom:1px;display:flex;height:16px;padding-left:1px;font-size:14px;line-height:16px;font-weight:700;white-space:nowrap}
.sheets span{padding:0 7px;margin-right:-1px;background:#808080;color:#101010;clip-path:polygon(5px 0,calc(100% - 2px) 0,100% 100%,2px 100%)}
.sheets .on{background:#b00000;color:#fff}
.tscroll{margin-left:auto;width:14px;display:flex;flex-direction:column}
.tscroll .sbtn{margin-top:1px;height:15px}
.thumb{height:38px;background:#3a3a3a;margin-top:1px}
.tscroll .last{margin-top:auto;margin-bottom:2px}

.extra{height:18px;flex:none;border-bottom:1px solid #c00000;display:flex;font-size:12px;line-height:17px;white-space:nowrap}
.extra>span{border-right:1px solid #900;text-align:center;width:56px}
.extra>span:first-child{width:40px}
.extra>span:nth-child(4){width:44px}
.extra-r{margin-left:auto;display:flex}
.extra-r span{border-left:1px solid #900;text-align:center}
.extra-r .welfare{width:86px}
.extra-r .small{width:50px}

/* quote */
.quote{width:234px;flex:none;border-right:1px solid #c00000;display:flex;flex-direction:column}
.qhead{height:27px;flex:none;border-bottom:1px solid #b00000;padding-left:34px;display:flex;align-items:center;gap:5px;white-space:nowrap}
.qhead b{color:#ffff00;font-size:14px;letter-spacing:.1px}
.qhead span{color:#40d8ff;font-size:16px}
.qsec{flex:none;border-bottom:1px solid #b00000;padding-bottom:1px}
.qsec.nopb{padding-bottom:0}
.qsec.pb3{padding-bottom:3px}
.q{display:grid;grid-template-columns:36px 78px 36px 80px;height:19px;line-height:19px;padding-left:1px;font-size:16px;color:#b0b0b0;white-space:nowrap}
.q b{text-align:right;font-size:14px;color:#b8b8b8}
.q b.r{color:#ff3232}.q b.g{color:#00e000}.q b.o{color:#c8c800}
.q span:nth-of-type(2){margin-left:4px}
.q .pe{font-size:14px;font-weight:700}
.q b:last-child{padding-right:1px}
.qname{height:21px;flex:none;border-bottom:1px solid #b00000;font-size:12px;line-height:21px;color:#b0b0b0;padding-left:1px}
.mini{display:block;width:233px;height:916px;flex:none;overflow:visible}
.vbars{stroke:#c8c000;stroke-width:4.5;fill:none}
.price{fill:none;stroke:#fff;stroke-width:1.3;vector-effect:non-scaling-stroke}
.avg{fill:none;stroke:#ffff00;stroke-width:1;vector-effect:non-scaling-stroke}
.mr text,.mg text,.mw,.my text{font-size:12px}
.mr text{fill:#ff3232}.mg text{fill:#00e000}.mw{fill:#fff}.my text{fill:#c8c800}
.qtabs{height:19px;flex:none;display:flex;border-top:1px solid #b00000;border-bottom:1px solid #c00000;font-size:14px;line-height:17px;color:#b0b0b0;text-align:center}
.qtabs span{width:29px;border-right:1px solid #900}
.qtabs span:first-child{width:28px}
.qtabs span:last-child{border:0;flex:1}
.qtabs .c{color:#40ffff}

/* finance */
.fin{flex:1;position:relative;padding:0 3px;color:#aab4be;font-size:14px;white-space:nowrap;overflow:hidden}
.mark{position:absolute;left:71px;top:12px;font-size:33px;font-weight:700;line-height:40px;color:rgba(150,150,150,.42);z-index:2}
.btns{height:55px;margin:0 -3px;border-bottom:1px solid #b00000;padding:4px 0 0 25px;display:grid;grid-template-columns:70px 70px;grid-template-rows:21px 21px;column-gap:20px;row-gap:3px;text-align:center;line-height:19px;font-size:14px}
.btns span{border:1px solid}
.br{color:#ff3232}.bg{color:#00c000}.bw{color:#c0c0c0}
.fhead{height:22px;display:flex;line-height:22px;color:#b0b8c0}
.fhead span{margin-left:6px}
.fhead .code{margin:0 26px 0 3px;width:40px}
.bl{color:#4090ff!important}
.fchart{display:block;width:219px;height:105px;margin:0 -3px}
.fy text{fill:#aab4be;font-size:13px;font-weight:700;text-anchor:end}
.ft{fill:#aab4be;font-size:13px;text-anchor:end}
.fx text{fill:#aab4be;font-size:13px;font-weight:700;text-anchor:middle}
.bo{fill:#f03000}.bgr{fill:#00d000}
.fsec{padding:3px 0;border-bottom:1px solid #333}
.pb0{padding:0;height:94px}
.pt0{padding-top:0}
.pb2{padding-bottom:2px}
.pb1{padding-bottom:1px}
.pt2b2{padding:2px 0}
.r4,.r3,.r3h,.r2,.r3e,.r3f{display:grid;height:21px;line-height:21px}
.r4{grid-template-columns:40px 64px 46px 63px}
.r4>span:nth-child(2),.r4>span:nth-child(4){text-align:right}
.r4>span:nth-child(4){padding-right:2px}
.l{color:#808080}
.l2{color:#808080;padding-left:3px}
sup{font-size:10px;line-height:0;vertical-align:5px}
.caret{height:10px;line-height:9px;text-align:center;font-size:12px}
.r3{grid-template-columns:1fr 90px 81px}
.r3>span:nth-child(n+2){text-align:right}
.line{height:21px;line-height:21px;overflow:hidden}
.or{color:#e88a00}
.eyehead{height:21px;line-height:21px;display:flex;gap:7px;justify-content:flex-end;padding-right:4px}
.eyehead span{color:#b8c0c8}
.eyehead .lb{margin-right:auto;color:#b8c0c8}
.eyesub{height:16px;line-height:16px;display:flex;justify-content:space-between;font-size:13px}
.eyesub .up{color:#d02040;fill:none;stroke:none}
.eyesub .dn{color:#4caf38;fill:none}
.vote{height:18px;margin:5px 0 6px;display:flex;color:#fff;font-size:13px;font-weight:700;line-height:18px}
.vup{width:142px;background:#e0264a;border-radius:9px 0 0 9px;display:flex;gap:3px;clip-path:polygon(0 0,100% 0,calc(100% - 3px) 100%,0 100%)}
.vdn{width:69px;margin-left:2px;background:#4caf38;border-radius:0 9px 9px 0;display:flex;gap:3px;justify-content:flex-end;clip-path:polygon(3px 0,100% 0,100% 100%,0 100%)}
.thumb-i{width:18px;height:18px;flex:none}
.r3h{grid-template-columns:60px 40px 66px 47px}
.r3h>span:nth-child(n+3){text-align:right}
.r3h .le{text-align:left}
.r2{grid-template-columns:47px 166px}
.r2.nar{grid-template-columns:38px 175px}
.r2 span{overflow:hidden}
.ftabs{height:21px;line-height:21px;display:flex;gap:7px;padding-left:19px}
.ftabs span{color:#b8c0c8}
.ftabs .i{margin-left:-3px}
.r3e{grid-template-columns:1fr 71px 72px}
.r3e>span:nth-child(n+2){text-align:right}
.r3f{grid-template-columns:1fr 55px 78px}
.r3f>span:nth-child(n+2){text-align:right}

/* status */
.idx{display:flex;gap:12px}
.idx span:first-child{margin-right:-11px}
.idx em{color:#e80000}
.idx .gn{color:#008000}
.meter{width:102px;height:12px;margin:-2px 0 0;flex:none}
.sicons{width:84px;height:14px;margin-left:auto;margin-right:3px;margin-top:-2px;flex:none}
```
